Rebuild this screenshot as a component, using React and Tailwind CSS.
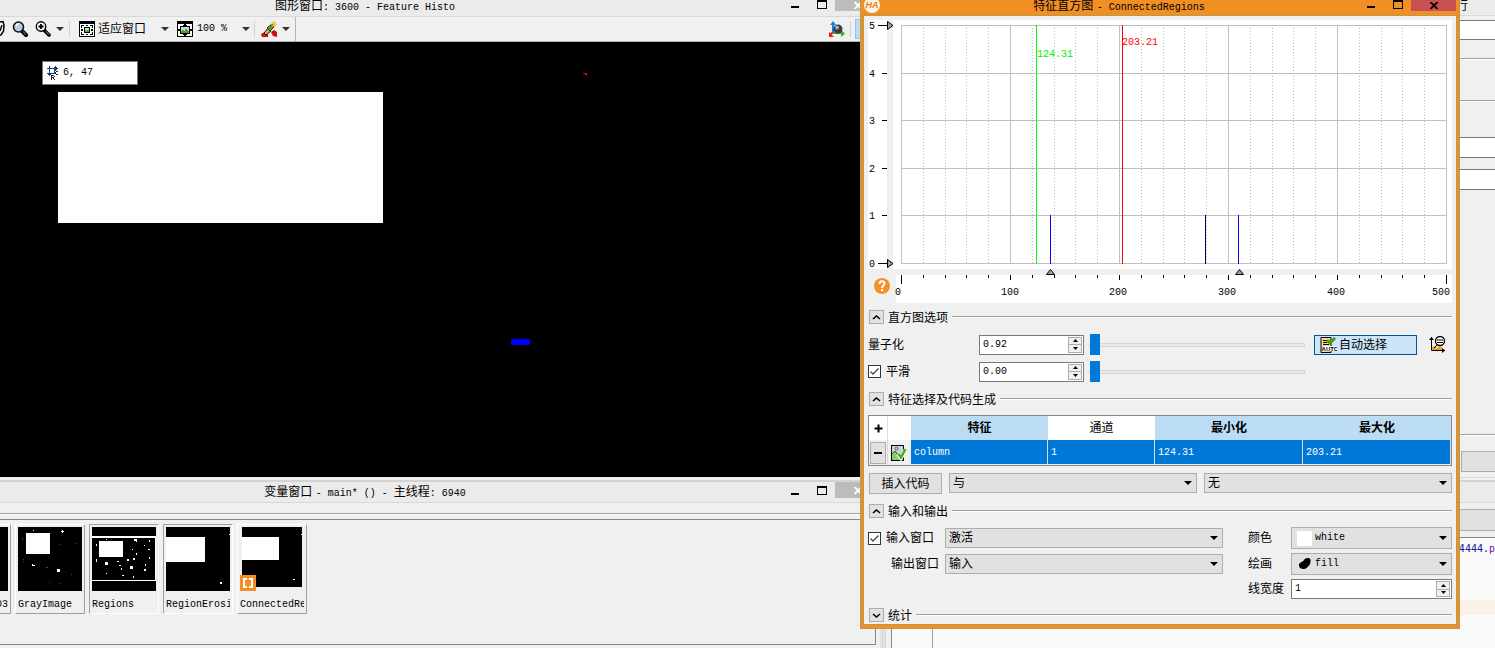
import { useState } from "react";

// ============================================================================
// ICONS
// ============================================================================
function PanIcon() {
    return (
        <svg width="5" height="18" viewBox="0 0 5 18" className="shrink-0">
            <path d="M0 2 L3 1.500 L4 5 L3.500 11 L1 15 L0 15" fill="#fff" stroke="#000" strokeWidth="1.500" />
            <path d="M2 5 L0 11" stroke="#000" strokeWidth="1.500" />
        </svg>
    );
}

function MagnifierIcon() {
    return (
        <svg width="16" height="16" viewBox="0 0 16 16" className="shrink-0">
            <path d="M9.500 9.500 L14 14" stroke="#000" strokeWidth="4" strokeLinecap="round" />
            <path d="M11 10.500 L14 13.500" stroke="#7a5a2c" strokeWidth="1.200" />
            <circle cx="6.500" cy="6" r="5" fill="#b9c8ea" stroke="#14161c" strokeWidth="1.600" />
            <path d="M4 5 a3 3 0 0 1 3 -2" stroke="#fff" strokeWidth="1.400" fill="none" />
        </svg>
    );
}

function ZoomInIcon() {
    return (
        <svg width="16" height="16" viewBox="0 0 16 16" className="shrink-0">
            <path d="M9.500 9.500 L14 14" stroke="#000" strokeWidth="3.600" strokeLinecap="round" />
            <path d="M11 10.500 L14 13.500" stroke="#7a5a2c" strokeWidth="1.200" />
            <circle cx="6" cy="5.500" r="4.700" fill="#fff" stroke="#000" strokeWidth="1.400" />
            <path d="M3.500 5.500 H8.500 M6 3 V8" stroke="#000" strokeWidth="1.800" />
        </svg>
    );
}

function FitWindowIcon() {
    return (
        <svg width="16" height="16" viewBox="0 0 16 16" shapeRendering="crispEdges" className="shrink-0">
            <rect x="0" y="0" width="16" height="16" fill="#000" />
            <rect x="1" y="3" width="14" height="12" fill="#fff" />
            <rect x="5" y="6" width="6" height="6" fill="#000" />
            <rect x="6" y="7" width="4" height="2" fill="#c6d6f4" />
            <rect x="6" y="9" width="4" height="2" fill="#5fae27" />
            <path d="M2 4h3v1h-2v2h-1z M14 4h-3v1h2v2h1z M2 14h3v-1h-2v-2h-1z M14 14h-3v-1h2v-2h1z M7 4h2v1h-2z M7 13h2v1h-2z M2 8h2v2h-2z M12 8h2v2h-2z" fill="#000" />
        </svg>
    );
}

function ZoomWindowIcon() {
    return (
        <svg width="16" height="16" viewBox="0 0 16 16" shapeRendering="crispEdges" className="shrink-0">
            <rect x="0" y="0" width="16" height="16" fill="#000" />
            <rect x="1" y="3" width="14" height="12" fill="#fff" />
            <path d="M7 3h2v2h-2z M7 13h2v2h-2z M0 8h4v2h-4z M12 8h4v2h-4z M6 4h4v1h-4z M6 13h4v1h-4z" fill="#000" />
            <rect x="3" y="5" width="10" height="8" fill="#000" />
            <rect x="4" y="6" width="8" height="6" fill="#c6d6f4" />
            <path d="M4 10h1v-1h2v1h1v-2h2v1h1v1h1v2h-8z" fill="#4fa31c" />
        </svg>
    );
}

function BrushIcon() {
    return (
        <svg width="17" height="17" viewBox="0 0 17 17" className="shrink-0">
            <path d="M0 13 L4 11 L7 13 L7 16 L1 16 Z M10 11 L13 9 L16 11 L16 16 L12 15 Z" fill="#d10f0f" />
            <path d="M3 12 L7 7 L10 10 L5 14 Z" fill="#d9a45f" stroke="#2b1605" strokeWidth="1" />
            <path d="M6 7 L11 3 L13 6 L9 10 Z" fill="#4aa72f" stroke="#153b0b" strokeWidth="1" />
            <path d="M13 0 V6 M10 3 H16 M11 1 L15 5 M15 1 L11 5" stroke="#f5b52a" strokeWidth="1" />
        </svg>
    );
}

function AxesIcon() {
    return (
        <svg width="18" height="17" viewBox="0 0 18 17" className="shrink-0">
            <path d="M5 12 V2" stroke="#0a84f0" strokeWidth="2" />
            <path d="M5 0 L8 4 H2 Z" fill="#0a84f0" />
            <path d="M5 12 H14" stroke="#38ad38" strokeWidth="2" />
            <path d="M17 12.500 L13 9 V16 Z" fill="#38ad38" />
            <path d="M5 11 L2 14" stroke="#e82020" strokeWidth="2" />
            <path d="M1 11 V16 H6 Z" fill="#e82020" />
            <circle cx="10" cy="8" r="4.500" fill="#3c3c3c" />
            <circle cx="9" cy="6.500" r="2" fill="#a9a9a9" />
        </svg>
    );
}

function CoordsIcon() {
    return (
        <svg width="12" height="14" viewBox="0 0 12 14" shapeRendering="crispEdges" className="shrink-0">
            <path d="M0 2h11v1h-11z M9 1h1v3h-1z M8 0h1v5h-1z M2 0h1v10h-1z M1 8h3v1h-3z M0 7h5v1h-5z M7 1h1v7h-1z M3 7h5v1h-5z" fill="#173f7d" />
            <path d="M9 5h2v1h-2z M8 6h1v2h-1z M9 8h2v1h-2z M4 9h1v5h-1z M5 9h2v1h-2z M7 10h1v1h-1z M5 11h2v1h-2z M6 12h1v1h-1z M7 13h1v1h-1z" fill="#222" />
        </svg>
    );
}

function HalconIcon() {
    return (
        <svg width="16" height="16" viewBox="0 0 16 16" className="shrink-0">
            <circle cx="8" cy="8" r="8" fill="#fdf3e4" />
            <text x="8" y="11" textAnchor="middle" fill="#ee7d14" fontSize="9" fontWeight="bold" fontStyle="italic" fontFamily="Liberation Sans, sans-serif">HA</text>
        </svg>
    );
}

function AutoIcon() {
    return (
        <svg width="17" height="16" viewBox="0 0 17 16" className="shrink-0">
            <path d="M1 0.500 H11 V15.500 H1 Z" fill="#fbd79a" stroke="#000" strokeWidth="1" />
            <path d="M3 3.500 H7 M3 5.500 H7 M3 7.500 H9" stroke="#000" strokeWidth="1" />
            <rect x="3" y="9" width="14" height="5" fill="#fff" />
            <text x="10" y="14" textAnchor="middle" fontSize="6" fontWeight="bold" fontFamily="Liberation Sans, sans-serif">AUTO</text>
            <path d="M7 3 L10 6 L15 1" stroke="#3ea414" strokeWidth="3" fill="none" />
        </svg>
    );
}

function ResetViewIcon() {
    return (
        <svg width="17" height="17" viewBox="0 0 17 17" className="shrink-0">
            <path d="M2.500 1 V14.500 H16" stroke="#000" strokeWidth="1" fill="none" />
            <path d="M0 4 L2.500 1 L5 4 Z M13 12 L16 14.500 L13 17 Z" fill="#000" />
            <path d="M3 14 V11 L5 10 L8 12 L10 10 L13 11 V14 Z" fill="#f0a51e" />
            <circle cx="11" cy="5" r="4.500" fill="#fff" stroke="#000" strokeWidth="1.300" />
            <path d="M8 4 H14 M8 6.500 H14 M8 9 L5 12" stroke="#000" strokeWidth="1" />
        </svg>
    );
}

function PictureCheckIcon() {
    return (
        <svg width="16" height="16" viewBox="0 0 16 16" className="shrink-0">
            <rect x="0.500" y="0.500" width="12" height="15" fill="#c3d2ee" stroke="#000" />
            <path d="M1 9 L4 6 L7 9 L9 8 L12 10 V15 H1 Z" fill="#8fca6e" />
            <path d="M1 9 L4 6 L9 12" stroke="#33502a" strokeWidth="1" fill="none" />
            <circle cx="5.500" cy="3.500" r="1.500" fill="#f3c878" stroke="#4d3c20" strokeWidth="0.700" />
            <path d="M7 9 L10 13 L15 4" stroke="#fff" strokeWidth="4" fill="none" />
            <path d="M7.500 9 L10 12.500 L14.500 4" stroke="#44b319" strokeWidth="2.600" fill="none" />
        </svg>
    );
}

function Caret({ className = "" }) {
    return (
        <svg width="8" height="4" viewBox="0 0 8 4" className={`shrink-0 ${className}`}>
            <path d="M0 0 H8 L4 4 Z" fill="currentColor" />
        </svg>
    );
}

// ============================================================================
// SHARED CONTROLS
// ============================================================================
function Mono({ children }) {
    return <span className="font-['Liberation_Mono',monospace] text-[10px]">{children}</span>;
}

function WindowControls({ active, tall }) {
    return (
        <div className={`flex shrink-0 justify-end items-start ${active ? "w-[98px]" : "w-[150px]"}`}>
            <button aria-label="最小化窗口" className={`w-[27px] flex items-end justify-center ${tall ? "h-4 pb-[3px]" : "h-3 pb-1"}`}>
                <span className="w-2 h-0.5 bg-black"></span>
            </button>
            <button aria-label="最大化窗口" className={`w-[27px] flex items-end justify-center pb-[3px] ${tall ? "h-4" : "h-3"}`}>
                <span className="w-[10px] h-[9px] border border-t-2 border-black"></span>
            </button>
            <button
                aria-label="关闭窗口"
                className={`w-[45px] flex items-center justify-center ${tall ? "h-4" : "h-[11px]"} ${active ? "bg-[#c75050] text-black" : "bg-[#bcbcbc] text-white"}`}
            >
                <svg width="8" height="7" viewBox="0 0 8 7">
                    <path d="M0.500 0 L7.500 7 M7.500 0 L0.500 7" stroke="currentColor" strokeWidth="1.800" />
                </svg>
            </button>
        </div>
    );
}

function SelectBox({ label, options, className = "", pad = "pl-[3px]", mono, children }) {
    return (
        <div className={`relative ${className}`}>
            <select
                aria-label={label}
                className={`w-full h-full appearance-none bg-[#e1e1e1] border border-[#adadad] ${pad} ${mono ? "font-['Liberation_Mono',monospace] text-[10px]" : ""}`}
            >
                {options.map((option) => (
                    <option key={option}>{option}</option>
                ))}
            </select>
            {children}
            <Caret className="absolute right-[5px] top-1/2 -translate-y-1/2 pointer-events-none" />
        </div>
    );
}

function SpinBox({ id, value, className = "" }) {
    const [text, setText] = useState(value);
    return (
        <div className={`flex h-5 bg-white border border-[#7a7a7a] ${className}`}>
            <input
                id={id}
                value={text}
                onChange={(e) => setText(e.target.value)}
                className="flex-1 min-w-0 pl-[3px] outline-none font-['Liberation_Mono',monospace] text-[10px]"
            />
            <div className="w-[14px] my-px mr-px flex flex-col border border-[#adadad] bg-[#f0f0f0]">
                <button aria-label="增加" className="flex-1 flex items-center justify-center border-b border-[#adadad]">
                    <svg width="5" height="3" viewBox="0 0 5 3"><path d="M0 3 H5 L2.500 0 Z" /></svg>
                </button>
                <button aria-label="减少" className="flex-1 flex items-center justify-center">
                    <svg width="5" height="3" viewBox="0 0 5 3"><path d="M0 0 H5 L2.500 3 Z" /></svg>
                </button>
            </div>
        </div>
    );
}

function Slider({ label }) {
    return (
        <input
            type="range"
            aria-label={label}
            defaultValue="0"
            className="w-[216px] h-[21px] appearance-none bg-transparent [&::-webkit-slider-runnable-track]:h-1 [&::-webkit-slider-runnable-track]:bg-[#e7eaea] [&::-webkit-slider-runnable-track]:border [&::-webkit-slider-runnable-track]:border-[#d6d6d6] [&::-webkit-slider-thumb]:appearance-none [&::-webkit-slider-thumb]:w-[10px] [&::-webkit-slider-thumb]:h-[21px] [&::-webkit-slider-thumb]:-mt-[10px] [&::-webkit-slider-thumb]:bg-[#0078d7]"
        />
    );
}

function CheckBox({ label }) {
    return (
        <label className="flex items-center gap-[5px]">
            <span className="relative w-[13px] h-[13px]">
                <input type="checkbox" defaultChecked className="peer block w-full h-full appearance-none bg-white border border-[#333]" />
                <svg width="13" height="13" viewBox="0 0 13 13" className="absolute inset-0 hidden peer-checked:block pointer-events-none">
                    <path d="M2.500 6.500 L5 9 L10.500 3.500" stroke="#444" strokeWidth="1.300" fill="none" />
                </svg>
            </span>
            {label}
        </label>
    );
}

function SectionHeader({ title, collapsed }) {
    return (
        <div className="flex items-center h-[14px]">
            <button aria-label={title} className="ml-px w-[15px] h-[14px] border border-[#adadad] bg-[#e1e1e1] flex items-center justify-center">
                <svg width="9" height="5" viewBox="0 0 9 5" className={collapsed ? "rotate-180" : ""}>
                    <path d="M1 4 L4.500 1 L8 4" stroke="#000" strokeWidth="1.600" fill="none" />
                </svg>
            </button>
            <h2 className="pt-0.5 mx-1">{title}</h2>
            <div className="flex-1 h-0.5 border-t border-[#a0a0a0] bg-white"></div>
        </div>
    );
}

// ============================================================================
// HISTOGRAM
// ============================================================================
const PLOT = { left: 33, top: 5, width: 545, height: 238 };
const xAt = (value) => Math.round(PLOT.left + (value / 500) * PLOT.width);
const yAt = (value) => Math.round(PLOT.top + PLOT.height - (value / 5) * PLOT.height);
const MINOR = Array.from({ length: 26 }, (_, i) => i * 20);
const MAJOR = [0, 100, 200, 300, 400, 500];
const COUNTS = [0, 1, 2, 3, 4, 5];
const BARS = [
    { x: 182, color: "#0000ff" },
    { x: 337, color: "#000060" },
    { x: 370, color: "#0000ff" },
];
// the outermost labels are pulled inside the scale
const LABEL_X = { 0: 30, 100: 142, 200: 250, 300: 359, 400: 468, 500: 573 };

function Histogram() {
    return (
        <svg width="584" height="283" viewBox="0 0 584 283" shapeRendering="crispEdges" fontFamily="Liberation Mono, monospace" fontSize="10">
            <rect x="0" y="0" width="19" height="249" fill="#fff" />
            <rect x="25" y="0" width="559" height="249" fill="#fff" />
            <rect x="28" y="255" width="556" height="28" fill="#fff" />
            {MINOR.map((v) => (
                v % 100 !== 0 && <path key={v} d={`M${xAt(v) + 0.5} 8 V243`} stroke="#c0c0c0" strokeDasharray="1 2" />
            ))}
            {MAJOR.map((v) => (
                <path key={v} d={`M${xAt(v) + 0.5} 5 V244`} stroke="#c0c0c0" />
            ))}
            {COUNTS.map((v) => (
                <g key={v}>
                    <path d={`M33 ${yAt(v) + 0.5} H579`} stroke="#c0c0c0" />
                    <path d={`M${v % 5 === 0 ? 10 : 14} ${yAt(v) + 0.5} H19`} stroke="#000" />
                    <text x="1" y={yAt(v) + 4}>{v}</text>
                </g>
            ))}
            {[0, 5].map((v) => (
                <path key={v} d={`M19.500 ${yAt(v) - 3.5} L25 ${yAt(v) + 0.5} L19.500 ${yAt(v) + 4.5} Z`} fill="#a0a0a0" stroke="#000" shapeRendering="auto" />
            ))}
            {BARS.map((bar) => (
                <path key={bar.x} d={`M${bar.x + 0.5} 195 V244`} stroke={bar.color} />
            ))}
            <path d="M168.500 5 V244" stroke="#00ff00" />
            <path d="M254.500 5 V244" stroke="#ff0000" />
            <text x="169" y="37" fill="#00f000">124.31</text>
            <text x="254" y="25" fill="#ff0000">203.21</text>
            {[182, 371].map((x) => (
                <path key={x} d={`M${x - 3.5} 254.500 L${x + 0.5} 249.500 L${x + 4.5} 254.500 Z`} fill="#a0a0a0" stroke="#000" shapeRendering="auto" />
            ))}
            {MINOR.map((v) => (
                <path key={v} d={`M${xAt(v) + 0.5} 255 V${v % 500 === 0 ? 264 : v % 100 === 0 ? 260 : 258}`} stroke="#000" />
            ))}
            {MAJOR.map((v) => (
                <text key={v} x={LABEL_X[v]} y="275" textAnchor="middle">{v}</text>
            ))}
            <g shapeRendering="auto">
                <circle cx="14" cy="266" r="8" fill="#f39325" />
                <path d="M11.500 264 C11.500 260.500 16.500 260.500 16.500 263.500 C16.500 265.500 14 265.500 14 268" stroke="#fff" strokeWidth="2" fill="none" />
                <rect x="13" y="269" width="2" height="2" fill="#fff" />
            </g>
        </svg>
    );
}

// ============================================================================
// FEATURE HISTOGRAM DIALOG
// ============================================================================
function FeatureTable() {
    return (
        <table className="mt-[9px] w-full table-fixed border border-[#828790] border-separate border-spacing-0 bg-[#f0f0f0]">
            <colgroup>
                <col className="w-[19px]" />
                <col className="w-[23px]" />
                <col className="w-[137px]" />
                <col className="w-[107px]" />
                <col className="w-[148px]" />
                <col />
            </colgroup>
            <thead>
                <tr className="h-6 bg-[#bcdcf4]">
                    <th className="p-0 bg-white border-r border-[#dcdcdc]">
                        <button aria-label="添加特征" className="w-full h-5 flex items-center justify-center">
                            <svg width="9" height="9" viewBox="0 0 9 9"><path d="M0.500 4.500 H8.500 M4.500 0.500 V8.500" stroke="#000" strokeWidth="2" /></svg>
                        </button>
                    </th>
                    <th className="p-0 bg-white"></th>
                    <th className="p-0">特征</th>
                    <th className="p-0 bg-white font-normal">通道</th>
                    <th className="p-0">最小化</th>
                    <th className="p-0">最大化</th>
                </tr>
            </thead>
            <tbody>
                <tr className="h-[25px] text-white">
                    <td className="p-0 border-r border-[#dcdcdc]">
                        <button aria-label="删除特征" className="ml-px w-4 h-[22px] border border-[#adadad] bg-[#e1e1e1] flex items-center justify-center">
                            <span className="w-2 h-0.5 bg-black"></span>
                        </button>
                    </td>
                    <td className="p-0 pl-[3px]"><PictureCheckIcon /></td>
                    {["column", "1", "124.31", "203.21"].map((cell) => (
                        <td key={cell} className="p-0 pl-[3px] bg-[#0078d7] border-r border-b border-b-[#f0f0f0] border-r-[#dcdcdc]"><Mono>{cell}</Mono></td>
                    ))}
                </tr>
            </tbody>
        </table>
    );
}

function HistogramDialog() {
    return (
        <section className="absolute left-[860px] top-0 w-[600px] bg-[#f28f24] border border-t-0 border-[#b79a4c] px-[3px] pb-[3px]">
            <header className="flex h-[15px]">
                <div className="-mt-[3px]"><HalconIcon /></div>
                <h1 className="flex-1 text-center leading-[12px]">特征直方图 <Mono>- ConnectedRegions</Mono></h1>
                <WindowControls active />
            </header>

            <div className="-mx-px border border-[#b79a4c] bg-[#f0f0f0] px-1 pt-1 pb-0.5">
                <Histogram />

                {/* Histogram options */}
                <div className="mt-[7px]"><SectionHeader title="直方图选项" /></div>
                <div className="mt-[10px] flex items-center h-[21px]">
                    <label htmlFor="quantization" className="w-[111px]">量子化</label>
                    <SpinBox id="quantization" value="0.92" className="w-[105px] mr-[5px]" />
                    <Slider label="量子化" />
                    <button className="ml-[9px] w-[103px] h-5 flex items-center gap-0.5 pl-[5px] border border-[#00559b] bg-[#cce4f7]">
                        <AutoIcon />自动选择
                    </button>
                    <button aria-label="重置视图" className="ml-3"><ResetViewIcon /></button>
                </div>
                <div className="mt-[6px] flex items-center h-[21px]">
                    <div className="w-[111px]"><CheckBox label="平滑" /></div>
                    <SpinBox id="smoothing" value="0.00" className="w-[105px] mr-[5px]" />
                    <Slider label="平滑" />
                </div>

                {/* Feature selection and code generation */}
                <div className="mt-[10px]"><SectionHeader title="特征选择及代码生成" /></div>
                <FeatureTable />
                <div className="mt-[7px] flex gap-[7px] pl-px">
                    <button className="w-[73px] h-[21px] border border-[#adadad] bg-[#e1e1e1]">插入代码</button>
                    <SelectBox label="连接" options={["与", "或"]} className="flex-1 h-5" />
                    <SelectBox label="操作" options={["无"]} className="flex-1 h-5" />
                </div>

                {/* Input and output */}
                <div className="mt-[10px]"><SectionHeader title="输入和输出" /></div>
                <div className="mt-[9px] grid grid-cols-[77px_278px_1fr_161px] gap-y-1 items-center">
                    <CheckBox label="输入窗口" />
                    <SelectBox label="输入窗口" options={["激活"]} className="h-5" />
                    <span className="pl-[25px]">颜色</span>
                    <SelectBox label="颜色" options={["white"]} className="h-[22px]" pad="pl-[23px]" mono>
                        <span className="absolute left-[6px] top-1 w-[15px] h-[15px] bg-white"></span>
                    </SelectBox>

                    <span className="pl-[23px]">输出窗口</span>
                    <SelectBox label="输出窗口" options={["输入"]} className="h-5" />
                    <span className="pl-[25px]">绘画</span>
                    <SelectBox label="绘画" options={["fill", "margin"]} className="h-[22px]" pad="pl-[23px]" mono>
                        <svg width="12" height="11" viewBox="0 0 12 11" className="absolute left-2 top-[5px]">
                            <path d="M0 7 C0 4 4 4 5 2 C6 0 11 -1 11.500 2 C12 6 9 10 5 11 C2 11 0 10 0 7 Z" />
                        </svg>
                    </SelectBox>

                    <label htmlFor="line-width" className="col-start-3 pl-[25px]">线宽度</label>
                    <SpinBox id="line-width" value="1" />
                </div>
                <div className="mt-[9px]"><SectionHeader title="统计" collapsed /></div>
            </div>
        </section>
    );
}

// ============================================================================
// GRAPHICS WINDOW
// ============================================================================
function Separator() {
    return <div className="w-px h-4 bg-[#d0d0d0]"></div>;
}

function GraphicsWindow() {
    return (
        <section>
            <header className="flex h-4 bg-[#ebebeb]">
                <h1 className="flex-1 text-center leading-[12px]">图形窗口<Mono>: 3600 - Feature Histo</Mono></h1>
                <WindowControls />
            </header>
            <div className="flex h-[26px] border-t border-t-[#d9d9d9] border-b border-b-[#b4b4b4] bg-[#f0f0f0] text-[#333]">
                <div className="flex items-center w-[296px] border-r border-[#b4b4b4]">
                    <button aria-label="平移"><PanIcon /></button>
                    <button aria-label="放大镜" className="ml-[7px]"><MagnifierIcon /></button>
                    <button aria-label="缩放" className="ml-[7px]"><ZoomInIcon /></button>
                    <Caret className="mx-[5px]" />
                    <Separator />
                    <button className="ml-[9px] w-[82px] flex items-center gap-[3px] leading-4 whitespace-nowrap text-black"><FitWindowIcon />适应窗口</button>
                    <Caret />
                    <button className="ml-2 w-[65px] flex items-center gap-1 leading-4 whitespace-nowrap text-black"><ZoomWindowIcon /><Mono>100 %</Mono></button>
                    <Caret className="mr-1" />
                    <Separator />
                    <button aria-label="清除" className="ml-[6px]"><BrushIcon /></button>
                    <Caret className="ml-1" />
                </div>
                <div className="flex-1 flex items-center justify-end gap-1">
                    <button aria-label="三维"><AxesIcon /></button>
                    <Separator />
                    <button aria-label="工具" className="w-[25px] h-5 border border-[#8fc3ee] bg-[#bcdcf4]"></button>
                </div>
            </div>
            <div className="relative h-[435px] bg-black">
                <div className="absolute left-[42px] top-[19px] w-24 h-6 flex items-center gap-1 pl-1 bg-white border border-[#777]">
                    <CoordsIcon /><Mono>6, 47</Mono>
                </div>
                <div className="absolute left-[58px] top-[50px] w-[325px] h-[131px] bg-white"></div>
                <svg width="5" height="3" viewBox="0 0 5 3" shapeRendering="crispEdges" className="absolute left-[583px] top-[31px]">
                    <path d="M0 0 H4 V3 H3 V2 H2 V1 H0 Z" fill="#e00000" />
                </svg>
                <div className="absolute left-[511px] top-[297px] w-[19px] h-[6px] rounded-[2px] bg-[#0000ff]"></div>
            </div>
        </section>
    );
}

// ============================================================================
// VARIABLE WINDOW
// ============================================================================
// each spot is [x, y, w, h] inside the 64px preview
const GRAY_SPOTS = [[8, 6, 24, 21], [43, 4, 3, 1], [44, 3, 1, 3], [39, 42, 3, 3], [14, 38, 3, 1], [14, 37, 1, 1], [15, 3, 1, 1]];
const GRAY_DIM = [[4, 11, 1, 2], [41, 17, 1, 1], [5, 32, 1, 1], [5, 34, 1, 1], [28, 40, 2, 1], [57, 16, 1, 1], [53, 47, 1, 1], [31, 55, 1, 1], [42, 56, 1, 1]];
const REGION_SPOTS = [
    [0, 9, 64, 2], [63, 11, 1, 43], [0, 53, 64, 1], [7, 14, 24, 16], [42, 12, 3, 2], [44, 14, 1, 1], [57, 13, 1, 2], [14, 12, 1, 1],
    [52, 18, 1, 1], [40, 22, 1, 1], [56, 22, 2, 1], [44, 26, 1, 2], [4, 17, 1, 2], [41, 31, 2, 2], [57, 30, 1, 2], [35, 32, 2, 2],
    [4, 32, 1, 3], [13, 35, 3, 3], [25, 34, 2, 1], [27, 38, 2, 1], [29, 41, 1, 2], [38, 39, 3, 3], [53, 37, 1, 2], [52, 42, 2, 2],
    [14, 46, 1, 1], [30, 48, 2, 1], [41, 49, 1, 2],
];
const VARIABLES = [
    { name: "03", spots: [], tail: true },
    { name: "GrayImage", spots: GRAY_SPOTS, dim: GRAY_DIM },
    { name: "Regions", spots: REGION_SPOTS, pressed: true },
    { name: "RegionErosion", spots: [[0, 10, 39, 25], [54, 55, 2, 2], [63, 7, 1, 1]], pressed: true },
    { name: "ConnectedRegions", spots: [[0, 11, 39, 24], [54, 55, 2, 1], [63, 7, 1, 1]], tuple: true },
];

function VariableCard({ variable }) {
    const size = variable.tuple ? 60 : 64;
    return (
        <button
            className={`relative block w-[70px] h-[90px] shrink-0 px-[2px] pt-[2px] border text-left overflow-hidden ${variable.pressed ? "border-t-[#a0a0a0] border-l-[#a0a0a0] border-r-white border-b-white" : "border-t-white border-l-white border-r-[#a0a0a0] border-b-[#a0a0a0]"}`}
        >
            <div className={`h-[68px] ${variable.tuple ? "pl-[2px]" : ""}`}>
                <svg width={size} height={size} viewBox="0 0 64 64" shapeRendering="crispEdges">
                    <rect width="64" height="64" fill="#000" />
                    {variable.spots.map(([x, y, w, h]) => (
                        <rect key={`${x}-${y}`} x={x} y={y} width={w} height={h} fill="#fff" />
                    ))}
                    {variable.dim?.map(([x, y, w, h]) => (
                        <rect key={`${x}-${y}`} x={x} y={y} width={w} height={h} fill="#4a4a4a" />
                    ))}
                </svg>
            </div>
            <div className={`w-16 overflow-hidden leading-4 ${variable.tail ? "text-right" : ""}`}><Mono>{variable.name}</Mono></div>
            {variable.tuple && (
                <svg width="16" height="16" viewBox="0 0 16 16" className="absolute left-[2px] top-[50px]" shapeRendering="crispEdges">
                    <rect width="16" height="16" fill="#f28f24" />
                    <path d="M3 3h4v2h-2v6h2v2h-4z M13 3h-4v2h2v6h-2v2h4z" fill="#fff" />
                </svg>
            )}
        </button>
    );
}

function VariableWindow() {
    return (
        <section className="flex-1 flex flex-col pt-[3px]">
            <header className="flex h-[23px] border-t-2 border-t-[#d3d3d3] border-b border-b-[#d9d9d9] bg-[#ebebeb]">
                <h1 className="flex-1 text-center leading-[20px]">变量窗口 <Mono>- main* () - </Mono>主线程<Mono>: 6940</Mono></h1>
                <WindowControls tall />
            </header>
            <div className="mt-[10px] h-0.5 border-t border-[#a0a0a0] bg-white"></div>
            <div className="mt-1 mb-[3px] mr-1 flex-1 border border-l-0 border-[#828790] overflow-hidden">
                <div className="flex gap-1 pt-1 -ml-[59px]">
                    {VARIABLES.map((variable) => (
                        <VariableCard key={variable.name} variable={variable} />
                    ))}
                </div>
            </div>
        </section>
    );
}

// ============================================================================
// PROGRAM WINDOW - mostly hidden below the dialog
// ============================================================================
function ProgramWindow() {
    return (
        <section className="flex-1 min-w-0 flex flex-col border-l border-[#d3d3d3] pl-[5px]">
            <header className="h-4 pr-[27px] text-right leading-[12px] bg-[#ebebeb] border-b border-[#d9d9d9]">行</header>
            <div className="mt-1 h-5 bg-white border-y border-[#7a7a7a]"></div>
            <div className="mt-[18px] h-0.5 border-t border-[#a0a0a0] bg-white"></div>
            <div className="mt-10 h-0.5 border-t border-[#a0a0a0] bg-white"></div>
            <div className="mt-[35px] h-[21px] bg-white border-y border-[#7a7a7a]"></div>
            <div className="mt-[11px] h-[21px] bg-white border-y border-[#7a7a7a]"></div>
            <div className="mt-[244px] h-0.5 border-t border-[#a0a0a0] bg-white"></div>
            <div className="mt-[15px] ml-[570px] h-[21px] bg-[#e1e1e1] border border-r-0 border-[#adadad]"></div>
            <div className="mt-[5px] h-[3px] border-t border-[#d9d9d9]"></div>
            <div className="h-[23px] border-t-2 border-t-[#d3d3d3] border-b border-b-[#d9d9d9] bg-[#ebebeb]"></div>
            <div className="mt-[6px] h-[22px] bg-[#e1e1e1] border-y border-[#adadad]"></div>
            <div className="mt-[6px] flex-1 flex bg-[#fafafa] border-t border-l border-[#828790]">
                <div className="w-[41px] border-r border-[#a0a0a0]"></div>
                <div className="flex-1 min-w-0">
                    <p className="mt-[3px] text-right leading-4 font-['DejaVu_Sans_Mono',monospace] text-[10px] text-[#1414a0]">4444.<span className="text-[#7a10b0]">p</span></p>
                    <div className="mt-[43px] h-[15px] bg-[#fdf1e6]"></div>
                </div>
            </div>
        </section>
    );
}

function App() {
    return (
        <main className="relative flex w-full h-screen min-h-[648px] overflow-hidden bg-[#f0f0f0] text-black text-[12px] leading-[14px] font-['Liberation_Sans','Noto_Sans_CJK_SC',sans-serif]">
            <div className="w-[880px] shrink-0 flex flex-col">
                <GraphicsWindow />
                <VariableWindow />
            </div>
            <div className="w-[5px] shrink-0 border-x-2 border-[#e4e4e4] bg-[#d3d3d3]"></div>
            <ProgramWindow />
            <HistogramDialog />
        </main>
    );
}

export default App
